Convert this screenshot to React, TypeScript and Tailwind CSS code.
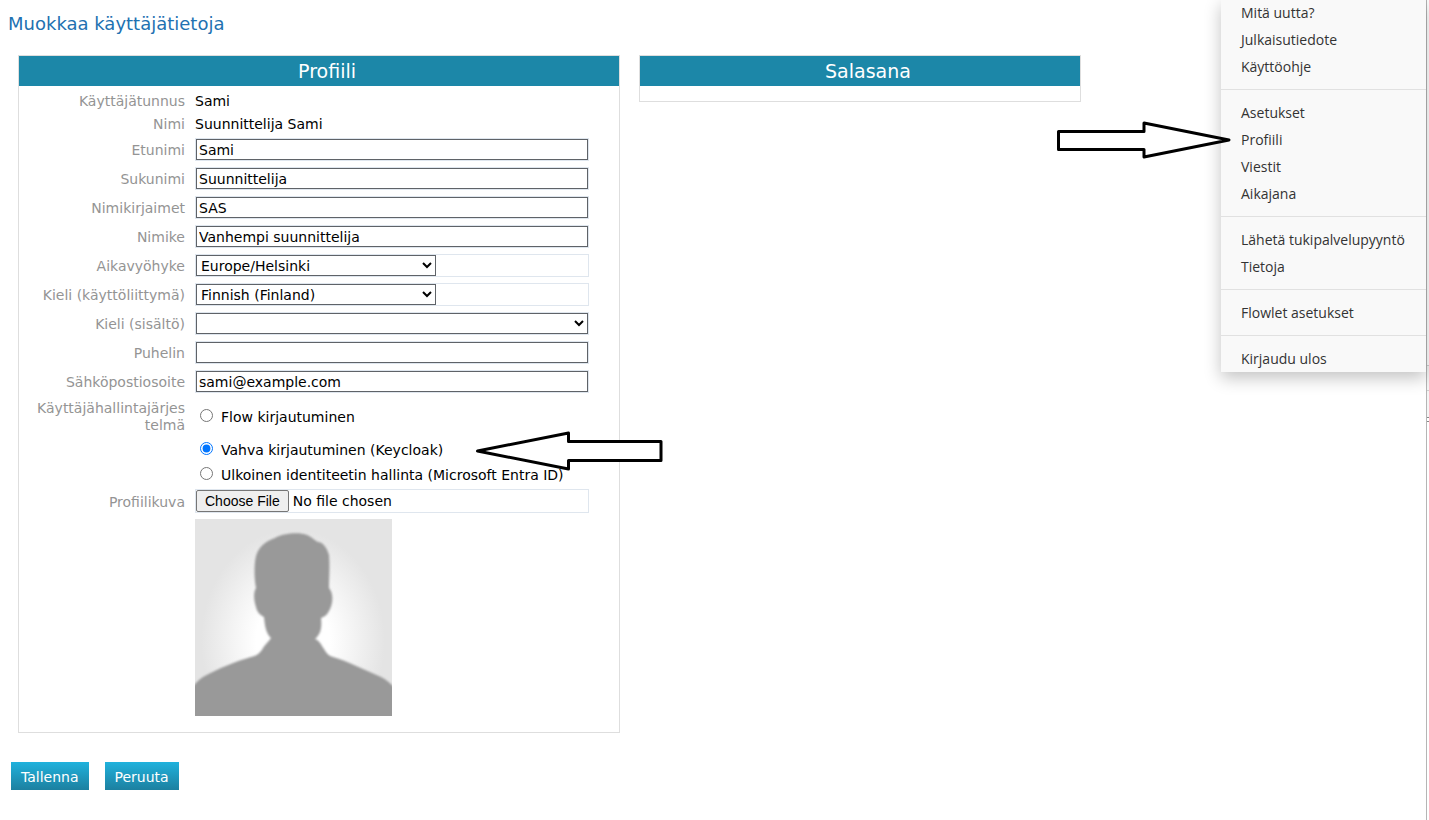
import { Fragment, type ReactNode } from "react";

const labelClass = "w-[166px] shrink-0 text-right text-[#949494] wrap-anywhere";
const frameClass = "flex min-w-0 flex-1 border border-[#dfe6ee]";
const boxClass = "h-[21px] w-full border border-[#5f6368] bg-white text-black outline-none";

function Row({ label, htmlFor, children }: { label: string; htmlFor?: string; children: ReactNode }) {
  return (
    <div className="flex min-h-[23px] items-center gap-[10px]">
      {htmlFor ? (
        <label htmlFor={htmlFor} className={`${labelClass} pt-0.5`}>{label}</label>
      ) : (
        <span className={`${labelClass} pt-0.5`}>{label}</span>
      )}
      {children}
    </div>
  );
}

function StaticRow({ label, value }: { label: string; value: string }) {
  return (
    <Row label={label}>
      <span className="pt-0.5">{value}</span>
    </Row>
  );
}

function TextRow({ id, label, value }: { id: string; label: string; value: string }) {
  return (
    <div className="py-[3px]">
      <Row label={label} htmlFor={id}>
        <div className={frameClass}>
          <input id={id} type="text" defaultValue={value} className={`${boxClass} px-0.5`} />
        </div>
      </Row>
    </div>
  );
}

function SelectRow({ id, label, value, short }: { id: string; label: string; value: string; short?: boolean }) {
  return (
    <div className="py-[3px]">
      <Row label={label} htmlFor={id}>
        <div className={frameClass}>
          <select id={id} defaultValue={value} className={`${boxClass} ${short ? "max-w-[240px]" : ""}`}>
            <option>{value}</option>
          </select>
        </div>
      </Row>
    </div>
  );
}

function Radio({ label, checked }: { label: string; checked?: boolean }) {
  return (
    <label className="flex items-center gap-2 pl-[5px]">
      <input type="radio" name="login" defaultChecked={checked} className="-mt-0.5 size-[13px] accent-[#0075ff]" />
      <span className="pt-0.5">{label}</span>
    </label>
  );
}

function Panel({ title, className, children }: { title: string; className: string; children?: ReactNode }) {
  return (
    <section className={`w-full border border-[#dedede] bg-white ${className}`}>
      <h2 className="bg-[#1c87a8] pl-4 text-center text-[19px] leading-[30px] font-medium text-white">{title}</h2>
      {children}
    </section>
  );
}

function Avatar() {
  return (
    <svg viewBox="0 0 197 197" className="size-[197px]" role="img" aria-label="Profiilikuva">
      <defs>
        <radialGradient id="glow" gradientUnits="userSpaceOnUse" cx="98" cy="122" r="112" gradientTransform="translate(98 122) scale(.82 1) translate(-98 -122)">
          <stop offset="0.4" stopColor="#fff" />
          <stop offset="0.65" stopColor="#f4f4f4" />
          <stop offset="1" stopColor="#e4e4e4" />
        </radialGradient>
        <filter id="soft"><feGaussianBlur stdDeviation="1.2" /></filter>
      </defs>
      <rect width="197" height="197" fill="url(#glow)" />
      <path
        filter="url(#soft)"
        fill="#999"
        d="M-5 200V172C-3 168 2 162 8 158C24 149 42 142 56 138C62 137 66 133 68 129C70 126 74 122 76 119C72 115 70 110 69 98C65 96 62 93 61 88C59 82 58 74 61 69C59 59 59 45 61 37C64 27 71 22 80 19C88 14 105 13 112 16C117 18 119 21 123 23C128 23 132 29 134 36C135 47 134 60 134 69C139 75 138 85 134 92C132 96 129 98 126 99C127 108 126 115 120 120C125 122 126 126 129 130C131 134 134 137 138 138C152 142 170 151 186 158C192 161 196 165 202 171V200Z"
      />
    </svg>
  );
}

const menu = [
  ["Mitä uutta?", "Julkaisutiedote", "Käyttöohje"],
  ["Asetukset", "Profiili", "Viestit", "Aikajana"],
  ["Lähetä tukipalvelupyyntö", "Tietoja"],
  ["Flowlet asetukset"],
  ["Kirjaudu ulos"],
];

function UserMenu() {
  return (
    <nav className="absolute -top-px right-[3px] w-[205px] bg-[#f9f9f9] font-['Open_Sans','Noto_Sans',sans-serif] text-[14px] leading-[27px] text-[#333] shadow-[0_6px_16px_rgba(0,0,0,0.24)]">
      {menu.map((group, i) => (
        <Fragment key={group[0]}>
          {i > 0 && <hr className="my-[9px] border-[#e1e1e1]" />}
          <ul>
            {group.map((item) => (
              <li key={item}>
                <a href="#" className="block pl-5 whitespace-nowrap">{item}</a>
              </li>
            ))}
          </ul>
        </Fragment>
      ))}
      <svg viewBox="0 0 176 40" className="absolute top-[121px] -left-[165px] h-[40px] w-[176px]" aria-hidden="true">
        <path d="M2.500 11.500H88V3L173 20L88 37V29.500H2.500Z" fill="#fff" stroke="#000" strokeWidth="3" strokeLinejoin="round" />
      </svg>
    </nav>
  );
}

const buttonClass = "h-7 bg-linear-to-b from-[#20b2dd] to-[#1c80a0] px-[10px] pt-0.5 text-white";

export default function App() {
  return (
    <div className="relative flex min-h-screen bg-white font-['DejaVu_Sans',Verdana,sans-serif] text-[14px] leading-[17px] text-black">
      <main className="min-w-0 flex-1">
        <h1 className="px-2 pt-3 text-[18px] leading-[23px] text-[#2271b1]">Muokkaa käyttäjätietoja</h1>
        <form onSubmit={(e) => e.preventDefault()}>
          <div className="mt-5 flex items-start gap-[19px] pl-[18px]">
            <Panel title="Profiili" className="max-w-[602px]">
              <div className="pt-[3px] pr-[30px] pb-4">
                <StaticRow label="Käyttäjätunnus" value="Sami" />
                <StaticRow label="Nimi" value="Suunnittelija Sami" />
                <TextRow id="first" label="Etunimi" value="Sami" />
                <TextRow id="last" label="Sukunimi" value="Suunnittelija" />
                <TextRow id="initials" label="Nimikirjaimet" value="SAS" />
                <TextRow id="title" label="Nimike" value="Vanhempi suunnittelija" />
                <SelectRow id="zone" label="Aikavyöhyke" value="Europe/Helsinki" short />
                <SelectRow id="ui-language" label="Kieli (käyttöliittymä)" value="Finnish (Finland)" short />
                <SelectRow id="content-language" label="Kieli (sisältö)" value="" />
                <TextRow id="phone" label="Puhelin" value="" />
                <TextRow id="email" label="Sähköpostiosoite" value="sami@example.com" />
                <div role="radiogroup" aria-label="Käyttäjähallintajärjestelmä">
                  <div className="flex h-[41px] items-center gap-[10px]">
                    <span className={`${labelClass} pl-4`}>Käyttäjähallintajärjestelmä</span>
                    <Radio label="Flow kirjautuminen" />
                  </div>
                  <div className="relative flex h-[25px] items-center pl-[176px]">
                    <Radio label="Vahva kirjautuminen (Keycloak)" checked />
                    <svg viewBox="0 0 192 42" className="absolute -top-[7px] left-[453px] z-10 h-[42px] w-[192px]" aria-hidden="true">
                      <path d="M5.500 21L96.500 3V11.500H189V30.500H96.500V39Z" fill="#fff" stroke="#000" strokeWidth="3" strokeLinejoin="round" />
                    </svg>
                  </div>
                  <div className="relative z-20 flex h-[25px] items-center pl-[176px]">
                    <Radio label="Ulkoinen identiteetin hallinta (Microsoft Entra ID)" />
                  </div>
                </div>
                <div className="pt-0.5 pb-1.5">
                  <Row label="Profiilikuva" htmlFor="picture">
                    <div className={frameClass}>
                      <input
                        id="picture"
                        type="file"
                        className="h-[22px] w-full leading-[22px] file:mr-1 file:h-[22px] file:rounded-[2px] file:border file:border-solid file:border-[#767676] file:bg-[#efefef] file:px-2 file:font-['Liberation_Sans',Arial,sans-serif] file:text-[14px] file:leading-[18px] file:text-black"
                      />
                    </div>
                  </Row>
                </div>
                <div className="pl-[176px]">
                  <Avatar />
                </div>
              </div>
            </Panel>
            <Panel title="Salasana" className="max-w-[442px] pb-[15px]" />
          </div>
          <div className="mt-[29px] flex gap-4 pl-[11px]">
            <button type="submit" className={buttonClass}>Tallenna</button>
            <button type="button" className={buttonClass}>Peruuta</button>
          </div>
        </form>
      </main>
      <aside className="w-[3px] border-l border-[#b5b5b5] pt-[365px]">
        <div className="h-[26px] border-y border-[#d0d0d0] bg-[#f5f5f5]" />
        <div className="h-[27px] border-b border-[#8a8a8a] bg-[#f5f5f5]" />
        <div className="h-1 border-b border-[#8a8a8a]" />
      </aside>
      <UserMenu />
    </div>
  );
}
